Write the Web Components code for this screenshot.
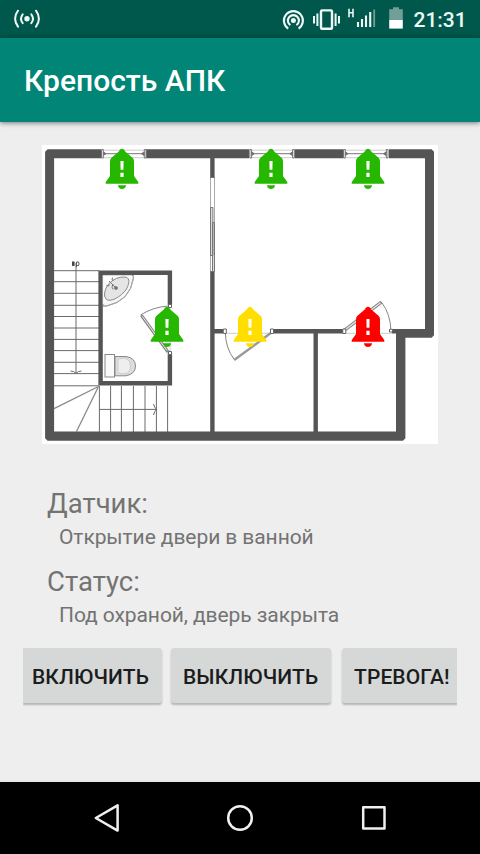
<!DOCTYPE html>
<html lang="ru">
<head>
<meta charset="utf-8">
<title>Крепость АПК</title>
<style>
html,body{margin:0;height:100%}
body{font-family:Roboto,"Liberation Sans",sans-serif;background:#eee;overflow:hidden}
</style>
</head>
<body>
<security-app></security-app>
<script>
function define(name, html, init) {
  const template = document.createElement('template');
  template.innerHTML = html;
  customElements.define(name, class extends HTMLElement {
    constructor() {
      super();
      this.attachShadow({mode: 'open'}).append(template.content.cloneNode(true));
    }
    connectedCallback() { if (init) init(this, this.shadowRoot); }
  });
}

define('status-bar', `
<style>
:host{display:flex;height:38px;background:#00574b;color:#eef8f6;align-items:center;padding:0 0 0 13px;box-sizing:border-box;flex:none}
svg{display:block;flex:none}
.space{flex:1}
.time{width:66.5px;font-size:21px;font-weight:500;line-height:38px;padding-top:1px;letter-spacing:-.05px;margin-left:9.5px}
</style>
<svg width="28" height="38" viewBox="13 0 28 38" fill="none" stroke="#eef8f6" stroke-width="2" stroke-linecap="round">
  <circle cx="27" cy="18.7" r="2.7" fill="#eef8f6" stroke="none"/>
  <path d="M22.7 14.3Q19.3 18.7 22.7 23.1M31.3 14.3Q34.7 18.7 31.3 23.1"/>
  <path d="M18 10.7Q12.2 18.7 18 26.7M36 10.7Q41.8 18.7 36 26.7"/>
</svg>
<span class="space"></span>
<svg width="122" height="38" viewBox="282 0 122 38" fill="none" stroke="#eef8f6">
  <circle cx="293.4" cy="20.6" r="2.5" fill="#eef8f6" stroke="none"/>
  <path stroke-width="2.1" d="M290.4 25.2A5.5 5.5 0 1 1 296.4 25.2M288.2 28.6A9.5 9.5 0 1 1 298.6 28.6"/>
  <rect x="321" y="10.4" width="11" height="18.4" rx="1" stroke-width="2.4"/>
  <path stroke-width="2" d="M317.4 13.4V26M314 16V23.4M335.6 13.4V26M339 16V23.4"/>
  <path stroke-width="1.6" d="M349 8.7V17.3M353 8.7V17.3M349 12.7H353"/>
  <path stroke-width="2.1" d="M358 22V27M362 19V27M366 15.5V27M370.2 12V27"/>
  <path stroke-width="1.8" stroke="#719f98" d="M374.2 9.5V27"/>
  <path stroke="none" fill="#719f98" d="M389.2 9.3H393V7.3H399V9.3H402.8V20H389.2Z"/>
  <path stroke="none" fill="#fff" d="M389.2 20H402.8V28.6H389.2Z"/>
</svg>
<span class="time"><slot></slot></span>`);

define('app-bar', `
<style>
:host{display:flex;height:84px;background:#008577;color:#fff;align-items:center;padding:0 24px;box-sizing:border-box;font-size:30px;font-weight:500;flex:none;box-shadow:0 1px 5px rgba(0,0,0,.5);white-space:nowrap}
</style><span><slot></slot></span>`);

define('alarm-bell', `
<style>
:host{position:absolute;width:34px;height:42px;color:#26b700}
:host([level=warn]){color:#ffde00}
:host([level=alarm]){color:#fe0000}
svg{display:block}
</style>
<svg width="34" height="42" viewBox="-17 -1 34 42" fill="currentColor">
  <path d="M-3.2 2.6Q-2.4 -.3 0 -.3T3.2 2.6L10.8 9Q12 10.3 12 12.5V27L16.3 33V34.8H-16.3V33L-12 27V12.5Q-12 10.3-10.8 9Z"/>
  <path d="M-4.1 36.2H4.1Q3.4 40 0 40T-4.1 36.2Z"/>
  <path fill="#fff" d="M-1.6 12H1.6L1.4 20.8H-1.4ZM-1.6 23.8H1.6V28H-1.6Z"/>
</svg>`, host => {
  host.style.left = (host.getAttribute('x') - 17) + 'px';
  host.style.top = (host.getAttribute('y') - 1) + 'px';
});

define('floor-plan', `
<style>
:host{display:block;position:relative;width:396px;height:299px;background:#fff;flex:none}
svg{display:block}
</style>
<svg width="396" height="299" viewBox="42 145 396 299" fill="none" stroke="#6b6b6b">
  <g stroke-width="1">
    <path d="M54 270.7H99M54 281.7H99M54 293.3H99M54 305.3H99M54 316.5H99M54 328H99M54 339.4H99M54 350.6H99M54 362.3H99M54 373.6H99M54 385.8H99"/>
    <path d="M99.4 386V432M110.6 386V432M121.4 386V432M133.4 386V432M145 386V432M156.4 386V432M167.6 386V432"/>
    <path d="M76 263V373M70.5 371Q74 371 76 373.4Q78 371 81.5 371M99 409.4H156.5M153.5 404Q154.3 407.5 156.6 409.4Q154.3 411.3 153.5 415"/>
    <path stroke="#8a8a8a" stroke-width="1.3" d="M98.5 386.5L54 408.7M98.5 386.5L76.5 431.5"/>
  </g>
  <path fill="#444" stroke="none" d="M72 261.5h2.6v4.4H72z"/>
  <path stroke="#555" d="M76.5 267V262H78.6Q79.4 264 78.6 265.6H76.5"/>
  <path fill="#555" stroke="none" d="M101 149.2H47.6L45.1 151.7V438.2L47.6 440.7H403L405.4 438.2V337.7H431.6L434 335.3V151.7L431.6 149.2H389V158.3H425V329H396V431.6H54.1V158.3H101ZM146 149.2H249V158.3H146ZM295 149.2H343V158.3H295Z"/>
  <g stroke="#555">
    <path stroke-width="4.4" d="M212.4 157V177M212.4 272V433M169.9 305V272.8H100.6V383.2H169.9V353M214 331.3H223M273.5 331.3H343M392 331.3H400M315.7 332V433"/>
  </g>
  <g stroke="#777">
    <path stroke="#aaa" d="M210.5 177V271.5M214.5 177V271.5"/>
    <path fill="#ddd" d="M210.5 207.5h2.4v48h-2.4zM212.5 222.5h2v49h-2zM210 271.5h5"/>
    <path d="M210 177.5h5M210 255.5h2.5"/>
    <g id="window"><path stroke="#ccc" d="M102 150.2h43M102 157.7h43"/><path d="M104 153.7h40"/><path fill="#eee" d="M101.5 149.5h1.8v8.5h-1.8zM144.3 149.5h1.8v8.5h-1.8z"/><path fill="#666" d="M103.5 152l2.5 1.7-2.5 1.7zM144 152l-2.5 1.7 2.5 1.7z"/></g>
    <use href="#window" x="148.3"/><use href="#window" x="242"/>
  </g>
  <g stroke="#8a8a8a">
    <path fill="#f7f7f7" d="M103 275.5H133.4V278Q130 301 107 306H103Z"/>
    <path stroke="#fff" fill="#fff" d="M103.2 275.4H132L103.2 304Z" stroke-width=".4"/>
    <path stroke="#aaa" d="M133.4 276V279Q130 301 106 306H103.3"/>
    <path fill="#e5e5e5" d="M104.5 296C104 285 114 276.8 124 277C130 277 130 282 126.5 289C121 297 110 303 106 299Z"/>
    <path stroke="#777" d="M109 281L116 288M106.5 285.5Q109 287 109.5 284.5M112.5 277.5Q111 281 113.5 280.5M113 284Q111 289 113.5 289"/>
    <circle cx="116" cy="288" r="1.5" fill="#666"/>
  </g>
  <g stroke="#888">
    <rect x="105" y="354.5" width="9.5" height="22.5" fill="#fafafa"/>
    <path fill="#ddd" d="M115 356.5H126Q135.5 358 135.5 366T126 375.8H115Z"/>
    <path stroke="#ccc" fill="#eee" d="M118 359Q130 355.5 130.5 366T118 373Z"/>
  </g>
  <g stroke="#858585">
    <path d="M140.5 315Q153 307 168.5 306M141 315L168 352"/>
    <path stroke-width="3" d="M141.5 315.5L168 352"/><path stroke="#eee" d="M142.2 316.2L167 350.5"/>
    <path stroke="#ccc" d="M170 307V352M224 333.3H273M343 333.3H392"/>
    <path d="M225.3 332Q225.5 348 234.2 359.5"/>
    <path stroke="#999" stroke-width="2.4" d="M234.2 360L271.5 332.5"/>
    <path stroke-width="3.4" d="M343.5 331L381.5 302"/><path stroke="#e3e3e3" stroke-width="1.4" d="M344.5 330.2L380.5 302.8"/>
    <path d="M381.5 302.2Q390.5 314 391 331"/>
    <path stroke="#666" fill="#fff" d="M223.3 329h3v4.5h-3zM270.5 329h3v4.5h-3zM342.8 329h3v4.5h-3zM389.5 329.3h3v2.7h-3zM168.5 304.5h3v3h-3zM168.5 351.5h3v3h-3z"/>
  </g>
</svg>
<alarm-bell x="80" y="4"></alarm-bell>
<alarm-bell x="229" y="4"></alarm-bell>
<alarm-bell x="326" y="4"></alarm-bell>
<alarm-bell x="125" y="162"></alarm-bell>
<alarm-bell x="208" y="162" level="warn"></alarm-bell>
<alarm-bell x="326" y="162" level="alarm"></alarm-bell>`);

define('info-row', `
<style>
:host{display:block;height:78px;color:#737373;white-space:nowrap}
.label{font-size:27.5px;line-height:36px}
.value{font-size:21px;line-height:30px;padding-left:12px;letter-spacing:-.08px}
</style>
<div class="label"><slot name="label"></slot></div><div class="value"><slot></slot></div>`);

define('raised-button', `
<style>
:host{display:flex;height:55px;box-sizing:border-box;align-items:center;background:#d6d8d7;border-radius:3px;box-shadow:0 2px 2px rgba(0,0,0,.24);color:#1b1c1c;font-size:21px;font-weight:500;white-space:nowrap;padding-top:2px;letter-spacing:.1px}
</style><span><slot></slot></span>`);

define('nav-bar', `
<style>
:host{display:block;height:72px;background:#000;flex:none}
svg{display:block}
</style>
<svg width="480" height="72" viewBox="0 782 480 72" fill="none" stroke="#f0f0f0" stroke-width="2.5" stroke-linejoin="round">
  <path d="M95.8 818L117.6 805.4V830.6Z"/><circle cx="240" cy="818" r="11.8"/><rect x="363.2" y="807.2" width="21.3" height="21.3"/>
</svg>`);

define('security-app', `
<style>
:host{display:flex;flex-direction:column;width:480px;height:854px;background:#eee}
main{flex:1;display:flex;flex-direction:column;padding:23px 23px 0;min-height:0;border-bottom:2px solid #e7e7e7}
floor-plan{margin-left:19px}
.info{padding:42px 0 0 24px}
.buttons{display:flex;gap:9px;overflow:hidden;height:62px;padding-top:1px;margin-top:5px;flex:none}
.buttons>*{flex:none;box-sizing:border-box}
.on{width:138.5px;padding-left:9px;border-radius:0 3px 3px 0}
.off{width:160.5px;padding-left:12.5px}
.alarm{width:120px;padding-left:12.5px;margin-left:1.5px}
</style>
<status-bar>21:31</status-bar>
<app-bar>Крепость АПК</app-bar>
<main>
  <floor-plan></floor-plan>
  <div class="info">
    <info-row><span slot="label">Датчик:</span>Открытие двери в ванной</info-row>
    <info-row><span slot="label">Статус:</span>Под охраной, дверь закрыта</info-row>
  </div>
  <div class="buttons">
    <raised-button class="on">ВКЛЮЧИТЬ</raised-button>
    <raised-button class="off">ВЫКЛЮЧИТЬ</raised-button>
    <raised-button class="alarm">ТРЕВОГА!</raised-button>
  </div>
</main>
<nav-bar></nav-bar>`);
</script>
</body>
</html>
